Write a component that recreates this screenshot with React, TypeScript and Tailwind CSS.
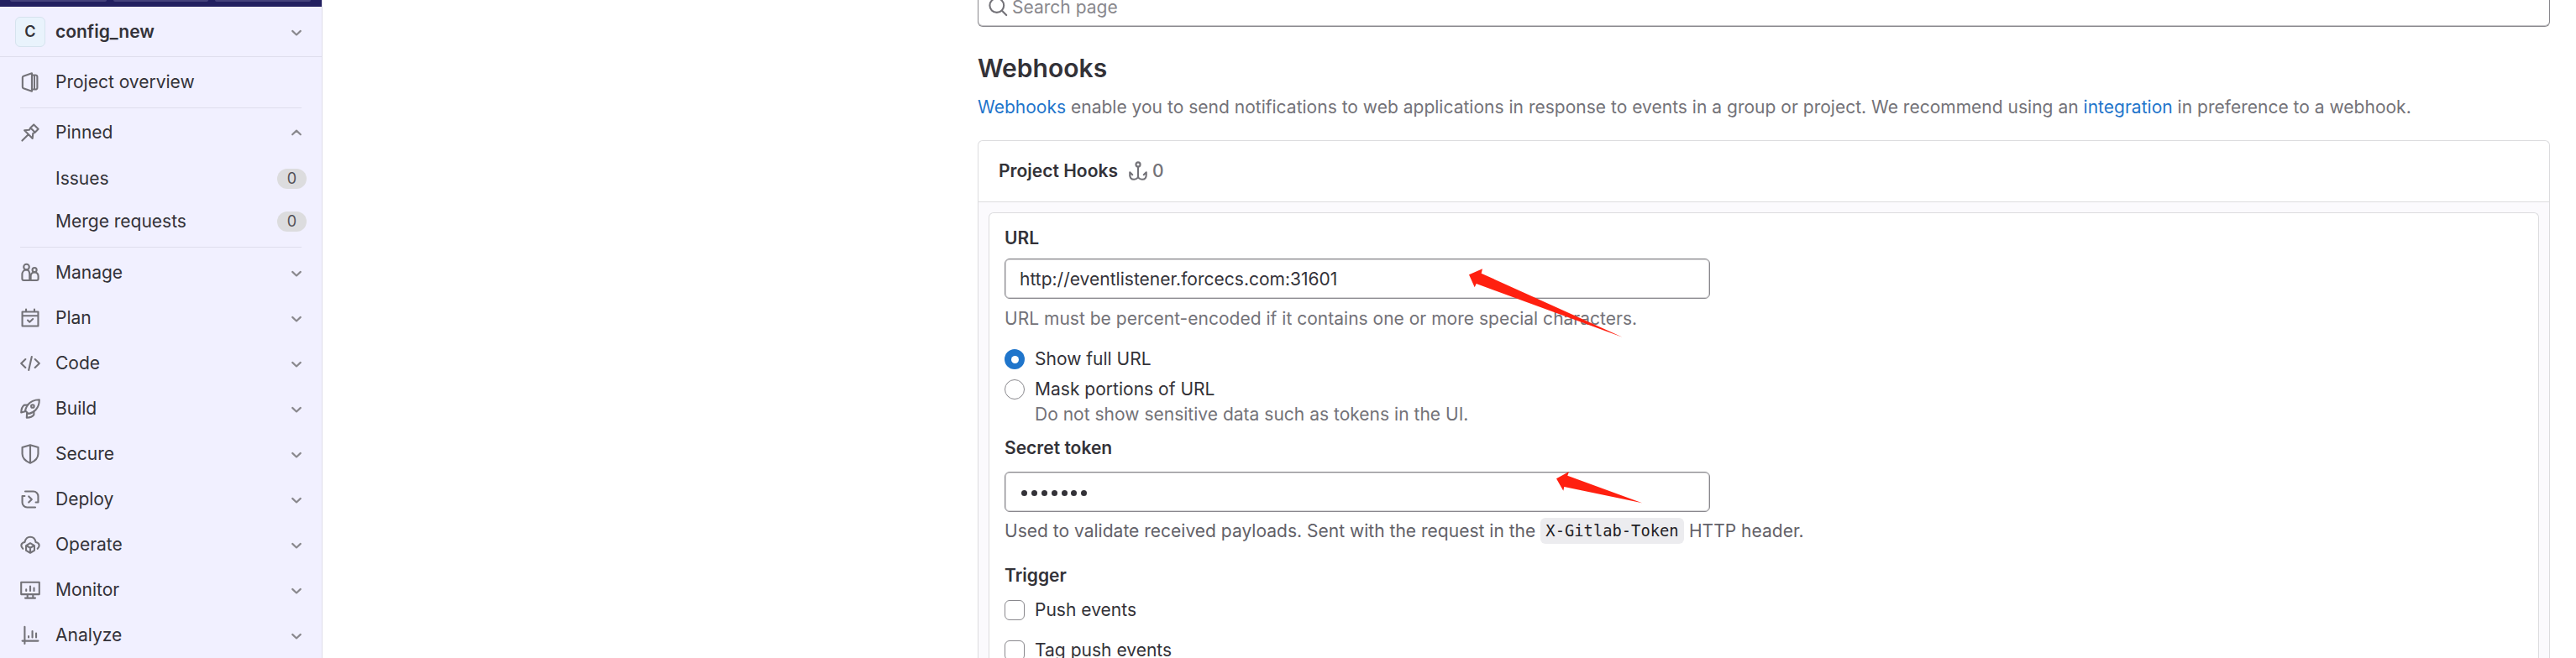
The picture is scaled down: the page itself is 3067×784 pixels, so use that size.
import type { ReactNode } from "react";

function Icon({ children, className = "h-6 w-6" }: { children: ReactNode; className?: string }) {
  return (
    <svg
      viewBox="0 0 16 16"
      className={`${className} shrink-0`}
      fill="none"
      stroke="currentColor"
      strokeWidth="1.4"
      strokeLinecap="round"
      strokeLinejoin="round"
    >
      {children}
    </svg>
  );
}

function Chevron({ up = false }: { up?: boolean }) {
  return (
    <svg viewBox="0 0 16 16" className="mr-[21px] h-[18px] w-[18px] shrink-0 text-[#89888d]" fill="none" stroke="currentColor" strokeWidth="1.9" strokeLinecap="round" strokeLinejoin="round">
      <path d={up ? "M3.700 10 8 5.900l4.300 4.100" : "M3.700 7 8 11.100 12.300 7"} />
    </svg>
  );
}

const sections: { label: string; icon: ReactNode }[] = [
  {
    label: "Manage",
    icon: (
      <>
        <circle cx="5" cy="3.4" r="2.2" />
        <path d="M5 5.6C2.9 5.6 1.6 7.3 1.6 9.4v3.3c0 .8.5 1.3 1.2 1.3h4.7V9.4C7.5 7.3 6.7 5.6 5 5.6z" />
        <circle cx="11.4" cy="5.7" r="1.7" />
        <path d="M11.4 7.6c-1.9 0-3 1.4-3 3.1V14h4.8c.8 0 1.2-.5 1.2-1.3v-2c0-1.700-1.100-3.100-3-3.100z" />
      </>
    ),
  },
  {
    label: "Plan",
    icon: <path d="M1.700 3h12.600v11.300H1.700zM1.700 6.200h12.600M4.700 1v2M11.300 1v2M6 9.700l1.500 1.400 2.600-2.400" />,
  },
  {
    label: "Code",
    icon: <path d="M4.200 4.700.8 8l3.400 3.300M11.800 4.700 15.200 8l-3.400 3.300M9.200 2.700 6.800 13.300" />,
  },
  {
    label: "Build",
    icon: (
      <>
        <path d="M15.200.8c-4.200 0-7.200 1.600-9.200 4.200-1 1.500-1.700 3-2 4.500L6.600 12c4-.8 8.600-4 8.600-11.200z" />
        <circle cx="9.900" cy="6" r="1.200" />
        <path d="M5.800 5.100H3.200C1.600 6.300.9 8.600.8 11l3.100-.9M10.900 10.200v2.600c-1.200 1.700-3.200 2.300-5.700 2.400l.2-3.600" />
      </>
    ),
  },
  {
    label: "Secure",
    icon: <path d="M8 .8 14.300 2.700v5.100c0 3.300-2.300 5.700-6.300 7.400-4-1.700-6.300-4.100-6.300-7.400V2.700zM8 1v14" />,
  },
  {
    label: "Deploy",
    icon: <path d="M4 1.700h6.500a3.800 3.800 0 0 1 3.800 3.800v4.800h-1.900M3.600 5.300H1.700v5.200a3.800 3.800 0 0 0 3.800 3.800H12M6.800 5.600 9.200 8l-2.400 2.400" />,
  },
  {
    label: "Operate",
    icon: (
      <>
        <path d="M2.200 11.200C.3 9.500.3 6.600 3.600 6c.6-2.600 2.300-4.200 4.400-4.200S11.900 3.400 12.400 6c3.300.6 3.300 3.500 1.400 5.200" />
        <path d="m8 6.800 3.300 1.900v3.900L8 14.500l-3.300-1.900V8.700zM4.900 8.800 8 10.500l3.100-1.700M8 10.600v3.700" />
      </>
    ),
  },
  {
    label: "Monitor",
    icon: <path d="M.8 1.800h14.400v9.600H.8zM5.800 11.600v2.300M10.200 11.600v2.300M4 14.400h8M4.800 7.600v1M8 5v3.600M11 6.300v2.300" />,
  },
  {
    label: "Analyze",
    icon: <path d="M3.600 1.200v13.400M1.700 12.400h12.600M6.700 8.700v1M9.700 4.700v5M12.700 6.400v3.300" />,
  },
];

function CountBadge() {
  return (
    <span className="mr-[18px] flex h-6 w-[35px] items-center justify-center rounded-full bg-[#dcdcde] text-[18px] text-[#535158]">0</span>
  );
}

function Sidebar() {
  return (
    <aside className="flex w-[384px] shrink-0 flex-col border-r border-[#dedde9] bg-[#f1f0ff]">
      <div className="flex h-2 shrink-0 gap-2 bg-[#232060] pl-3">
        <div className="h-0.5 w-[115px] rounded-b-sm bg-[#45427b]" />
        <div className="h-0.5 w-[113px] rounded-b-sm bg-[#45427b]" />
        <div className="h-0.5 w-[114px] rounded-b-sm bg-[#45427b]" />
      </div>
      <div className="flex h-[60px] shrink-0 items-center border-b border-[#dfdeed] pl-[18px]">
        <span className="flex h-9 w-9 items-center justify-center rounded-[6px] border border-[#d6e3ee] bg-[#e9f3fc] text-[18px] font-semibold text-[#333238]">C</span>
        <span className="flex-1 pl-3 text-[21px] font-semibold">config_new</span>
        <Chevron />
      </div>
      <div className="flex h-[60px] shrink-0 items-center gap-[18px] pl-6">
        <Icon className="h-6 w-6 text-[#737278]">
          <path d="M9.300.9v14.200L2.600 12.900a1 1 0 0 1-.7-1V4.100a1 1 0 0 1 .7-1zM9.600 2.300h2.600a1.400 1.400 0 0 1 1.400 1.400v8.600a1.400 1.400 0 0 1-1.400 1.400H9.600M11.300 2.300v11.400" />
        </Icon>
        <span>Project overview</span>
      </div>
      <div className="ml-6 h-px w-[335px] shrink-0 bg-[#dfdeed]" />
      <div className="flex h-[58px] shrink-0 items-center gap-[18px] pl-6">
        <Icon className="h-6 w-6 text-[#737278]">
          <path d="M10.800 1.600 14.400 5.200 11.800 7.800 10.200 8.600 9.800 12.600 3.400 6.200 7.300 5.800 8.200 4.200zM8.200 4.200 11.800 7.800M6.500 9.500 1.600 14.400" />
        </Icon>
        <span className="flex-1">Pinned</span>
        <Chevron up />
      </div>
      {["Issues", "Merge requests"].map((label) => (
        <div key={label} className="flex h-[51px] shrink-0 items-center pl-[66px]">
          <span className="flex-1">{label}</span>
          <CountBadge />
        </div>
      ))}
      <div className="mt-[5px] mb-[3px] ml-6 h-px w-[335px] shrink-0 bg-[#dfdeed]" />
      {sections.map(({ label, icon }) => (
        <div key={label} className="flex h-[54px] shrink-0 items-center gap-[18px] pl-6">
          <Icon className="h-6 w-6 text-[#737278]">{icon}</Icon>
          <span className="flex-1">{label}</span>
          <Chevron />
        </div>
      ))}
    </aside>
  );
}

function Field({ children }: { children: ReactNode }) {
  return (
    <div className="flex h-12 w-[840px] items-center rounded-[6px] border border-[#89888d] bg-white pl-[17px] shadow-[inset_0_0_0_1px_rgba(137,136,141,0.35)]">
      {children}
    </div>
  );
}

function Arrow({ points, className }: { points: string; className: string }) {
  return (
    <svg className={`absolute ${className}`} fill="#ff2010">
      <polygon points={points} />
    </svg>
  );
}

export default function App() {
  return (
    <div className="relative flex h-[784px] w-[3067px] overflow-hidden bg-white font-['Inter',sans-serif] text-[21px] leading-[30px] text-[#333238]">
      <Sidebar />
      <main className="flex flex-1 flex-col pr-[31px] pl-[780px] tracking-[0.013px]">
        <div className="flex h-8 shrink-0 items-start gap-[5px] rounded-b-[6px] border border-t-0 border-[#89888d] pl-[11px] text-[#89888d] shadow-[inset_0_-1px_0_0_rgba(137,136,141,0.5)]">
          <Icon className="-mt-1 h-6 w-6 text-[#737278]">
            <circle cx="7.200" cy="7" r="5.600" />
            <path d="m11.300 11.200 3.500 3.500" />
          </Icon>
          <span className="-mt-[6px]">Search page</span>
        </div>
        <h1 className="mt-[31px] h-9 text-[30px] leading-9 font-semibold">Webhooks</h1>
        <p className="mt-[14px] text-[#737278]">
          <span className="text-[#1f75cb]">Webhooks</span> enable you to send notifications to web applications in response to events in a group or project. We recommend using an{" "}
          <span className="text-[#1f75cb]">integration</span> in preference to a webhook.
        </p>
        <section className="mt-[24px] flex flex-1 flex-col rounded-t-[6px] border border-b-0 border-[#dcdcde]">
          <div className="flex h-[73px] shrink-0 items-center border-b border-[#dcdcde] pl-6">
            <h2 className="font-semibold">Project Hooks</h2>
            <Icon className="ml-3 h-6 w-6 text-[#737278]">
              <circle cx="8" cy="2.600" r="1.700" />
              <path d="M8 4.300v8.200M1.500 12V8.900l2 1.900M1.500 9.200v1.600c0 2.200 1.200 3.700 3.200 3.700S8 13.300 8 11.800c0 1.500 1.300 2.700 3.300 2.700s3.200-1.500 3.200-3.700V8.900l-2 1.900" />
            </Icon>
            <span className="ml-[5px] font-medium text-[#737278]">0</span>
          </div>
          <div className="flex flex-1 flex-col bg-[#fbfafd] px-3 pt-3">
            <form className="flex flex-1 flex-col rounded-t-[6px] border border-b-0 border-[#dcdcde] bg-white pl-[18px]">
              <div className="mt-[15px] font-semibold">URL</div>
              <div className="mt-[9px]">
                <Field>
                  <span className="pt-px">http://eventlistener.forcecs.com:31601</span>
                </Field>
              </div>
              <div className="mt-[9px] text-[#737278]">URL must be percent-encoded if it contains one or more special characters.</div>
              <div className="mt-[18px] flex h-[30px] items-center gap-3">
                <span className="flex h-6 w-6 items-center justify-center rounded-full bg-[#1f75cb]">
                  <span className="h-[9px] w-[9px] rounded-full bg-white" />
                </span>
                <span>Show full URL</span>
              </div>
              <div className="mt-[6px] flex h-[30px] items-center gap-3">
                <span className="h-6 w-6 rounded-full border border-[#89888d]" />
                <span>Mask portions of URL</span>
              </div>
              <div className="ml-9 text-[#737278]">Do not show sensitive data such as tokens in the UI.</div>
              <div className="mt-[10px] font-semibold">Secret token</div>
              <div className="mt-[13px]">
                <Field>
                  <span className="flex gap-[4.900px] pt-0.5 pl-[2px]">
                    {Array.from({ length: 7 }, (_, i) => (
                      <span key={i} className="h-[7px] w-[7px] rounded-full bg-[#333238]" />
                    ))}
                  </span>
                </Field>
              </div>
              <div className="mt-[7px] flex h-[31px] items-center text-[#626168]">
                <span className="w-[638px] whitespace-nowrap">Used to validate received payloads. Sent with the request in the</span>
                <code className="flex h-[31px] w-[171px] items-center justify-center rounded-[6px] bg-[#ececef] font-['DejaVu_Sans_Mono',monospace] text-[18.800px] tracking-normal text-[#1f1e24]">X-Gitlab-Token</code>
                <span className="ml-[6px]">HTTP header.</span>
              </div>
              <div className="mt-[23px] font-semibold">Trigger</div>
              <div className="mt-[11px] flex h-[30px] items-center gap-3">
                <span className="h-6 w-6 rounded-[6px] border border-[#89888d]" />
                <span>Push events</span>
              </div>
              <div className="mt-[18px] flex h-[30px] items-center gap-3">
                <span className="h-6 w-6 rounded-[6px] border border-[#89888d]" />
                <span>Tag push events</span>
              </div>
            </form>
          </div>
        </section>
      </main>
      <Arrow className="top-[320px] left-[1749px] h-[84px] w-[184px]" points="0,7.300 16,0.300 14.700,5.700 182.700,81.700 8.700,18 6.700,22.300" />
      <Arrow className="top-[562px] left-[1853px] h-[40px] w-[104px]" points="0,8.300 15,0 13.300,4.700 102,37.300 9.300,18 8.300,22.700" />
    </div>
  );
}
